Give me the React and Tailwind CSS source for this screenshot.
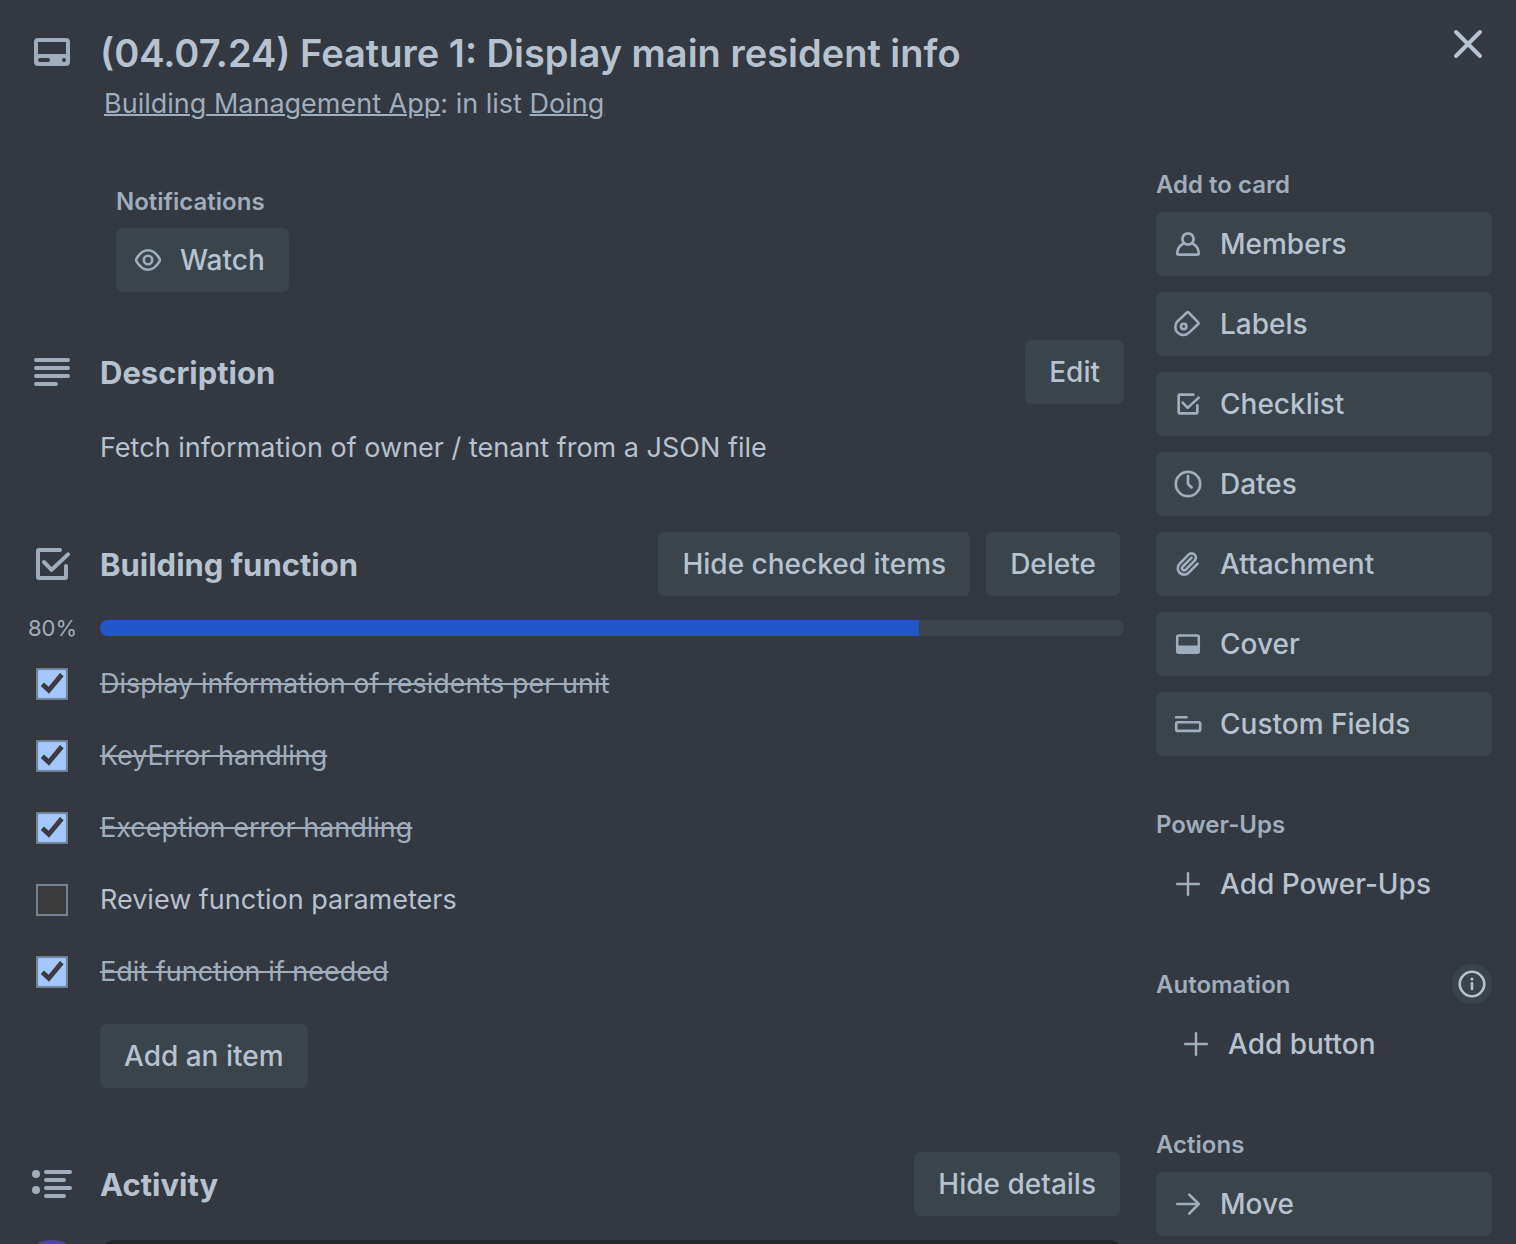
import React, { useState } from "react";

function Icon({ box = 32, className = "size-8", width = 2, children }) {
  return (
    <svg
      viewBox={`0 0 ${box} ${box}`}
      className={`shrink-0 ${className}`}
      fill="none"
      stroke="currentColor"
      strokeWidth={width}
      strokeLinecap="round"
      strokeLinejoin="round"
      aria-hidden="true"
    >
      {children}
    </svg>
  );
}

const SectionIcon = ({ children }) => (
  <Icon box={24} className="size-12 text-[#9fadbc]">
    {children}
  </Icon>
);

const checkSquare = (
  <>
    <path d="M16 5H5.6a.6.6 0 0 0-.6.6v12.8a.6.6 0 0 0 .6.6h12.8a.6.6 0 0 0 .6-.6V13" />
    <path d="M8 11l3.8 3.9L20 7.2" />
  </>
);

const icons = {
  members: (
    <Icon width={2.7}>
      <circle cx="16" cy="11" r="5.600" />
      <path d="M11.200 15.600C7.800 17.500 5.300 21 5.300 25.400a1.200 1.200 0 0 0 1.200 1.200h19a1.200 1.200 0 0 0 1.200-1.200C26.700 21 24.200 17.500 20.800 15.600" />
    </Icon>
  ),
  labels: (
    <Icon width={2.6}>
      <path d="M5.600 13.200L14.900 4.500a1.200 1.200 0 0 1 1.700 0L26.200 14.300a1.200 1.200 0 0 1 0 1.700L17.100 24.600A8 8 0 1 1 5.600 13.200Z" />
      <circle cx="11.700" cy="18.500" r="2.700" />
    </Icon>
  ),
  checklist: (
    <Icon box={24} width={2}>
      {checkSquare}
    </Icon>
  ),
  dates: (
    <Icon width={2.700}>
      <circle cx="16" cy="16" r="12.200" />
      <path d="M16 8v8l3.600 3.400" />
    </Icon>
  ),
  attachment: (
    <Icon box={24} width={2.5}>
      <g transform="translate(11.500 12) scale(.8) translate(-12 -12)">
        <path d="m16 6-8.414 8.586a2 2 0 0 0 2.829 2.829l8.414-8.586a4 4 0 1 0-5.657-5.657l-8.379 8.551a6 6 0 1 0 8.485 8.485l8.379-8.551" />
      </g>
    </Icon>
  ),
  cover: (
    <Icon width={2.5}>
      <rect x="5.200" y="7.500" width="21.600" height="17.300" rx="1.500" />
      <path d="M6 17.500h20v6.500H6z" fill="currentColor" stroke="none" />
    </Icon>
  ),
  fields: (
    <Icon width={2.6}>
      <path d="M4.200 9.200h10.400" />
      <rect x="4.200" y="14.300" width="24" height="8.600" rx="1.500" />
    </Icon>
  ),
  plus: (
    <Icon width={2.5}>
      <path d="M16 5.200v21.600M5.200 16h21.600" />
    </Icon>
  ),
  arrow: (
    <Icon width={2.6}>
      <path d="M5.200 16h21.600M17.200 6.600L26.800 16l-9.600 9.600" />
    </Icon>
  ),
  eye: (
    <Icon width={2.6}>
      <path d="M4.500 14.600C7.500 9.600 11.300 6.300 16 6.300s8.500 3.300 11.500 8.300a2.700 2.700 0 0 1 0 2.800C24.500 22.400 20.700 25.700 16 25.700S7.500 22.400 4.500 17.400a2.700 2.700 0 0 1 0-2.800Z" />
      <circle cx="16" cy="16" r="4.200" />
    </Icon>
  ),
};

const Button = ({ children, className = "" }) => (
  <button type="button" className={`h-16 rounded-md bg-[#3b444a] px-6 text-[28px] leading-8 font-medium whitespace-nowrap text-[#b6c2cf] ${className}`}>
    {children}
  </button>
);

const SideButton = ({ icon, children, className = "bg-[#3b444a] px-4" }) => (
  <button type="button" className={`flex h-16 w-full items-center gap-4 rounded-md text-[28px] leading-8 font-medium text-[#b6c2cf] ${className}`}>
    <span className="text-[#9fadbc]">{icons[icon]}</span>
    {children}
  </button>
);

function SideSection({ title, action, children }) {
  return (
    <section>
      <div className="mb-2 flex h-10 items-center justify-between">
        <h3 className="pt-0.5 text-2xl font-semibold text-[#9fadbc]">{title}</h3>
        {action}
      </div>
      <div className="flex flex-col gap-4">{children}</div>
    </section>
  );
}

function SectionHeader({ icon, title, children, className = "" }) {
  return (
    <div className={`flex h-16 items-center ${className}`}>
      <SectionIcon>{icon}</SectionIcon>
      <h2 className="ml-6 grow pt-0.5 text-[31px] font-bold">{title}</h2>
      <div className="flex gap-4">{children}</div>
    </div>
  );
}

const initialItems = [
  { text: "Display information of residents per unit", done: true },
  { text: "KeyError handling", done: true },
  { text: "Exception error handling", done: true },
  { text: "Review function parameters", done: false },
  { text: "Edit function if needed", done: true },
];

function ChecklistItem({ item, onToggle }) {
  return (
    <li>
      <label className="flex h-18 items-center gap-8 pl-2">
        <span className="relative size-8 shrink-0">
          <input
            type="checkbox"
            checked={item.done}
            onChange={onToggle}
            className="block size-8 appearance-none border-2 border-[#738496] bg-[#3b3b3b] checked:bg-[#a4c7ff]"
          />
          {item.done && (
            <svg viewBox="0 0 32 32" className="pointer-events-none absolute inset-0 size-8" fill="none" stroke="#3b3b3b" strokeWidth="4.800" aria-hidden="true">
              <path d="M6.400 16.200l6.400 6L25.800 6.600" />
            </svg>
          )}
        </span>
        <span className={item.done ? "text-[27px] text-[#9fadbc] line-through decoration-2" : "text-[27px]"}>{item.text}</span>
      </label>
    </li>
  );
}

export default function App() {
  const [items, setItems] = useState(initialItems);
  const percent = Math.round((items.filter((i) => i.done).length / items.length) * 100);
  const toggle = (index) => setItems(items.map((it, i) => (i === index ? { ...it, done: !it.done } : it)));

  return (
    <div className="h-screen overflow-hidden bg-[#343840] font-['Inter','Liberation_Sans',sans-serif] text-[#b6c2cf]">
      <header className="flex items-start pt-5 pr-6 pl-7">
        <div className="mt-2">
          <SectionIcon>
            <path
              fillRule="evenodd"
              fill="currentColor"
              stroke="none"
              d="M5 5h14a2 2 0 0 1 2 2v10a2 2 0 0 1-2 2H5a2 2 0 0 1-2-2V7a2 2 0 0 1 2-2ZM5 7v6h14V7ZM6 15a1 1 0 0 0 0 2h4a1 1 0 0 0 0-2ZM18 15a1 1 0 1 0 0 2a1 1 0 0 0 0-2Z"
            />
          </SectionIcon>
        </div>
        <div className="mt-2 ml-6 grow">
          <h1 className="text-[38px] leading-[50px] font-semibold">(04.07.24) Feature 1: Display main resident info</h1>
          <p className="mt-2 ml-1 text-[27px] leading-9 text-[#9fadbc]">
            <a href="#board" className="underline decoration-2">Building Management App</a>: in list{" "}
            <a href="#list" className="underline decoration-2">Doing</a>
          </p>
        </div>
        <button type="button" aria-label="Close">
          <Icon box={24} className="size-12">
            <path d="M6 6l12 12M18 6L6 18" />
          </Icon>
        </button>
      </header>

      <div className="mt-[42px] flex gap-8 pr-6 pl-7">
        <main className="grow">
          <section className="mt-5 ml-22">
            <h3 className="pt-0.5 text-2xl font-semibold text-[#9fadbc]">Notifications</h3>
            <Button className="mt-2.5 flex items-center gap-4 pl-4">
              <span className="text-[#9fadbc]">{icons.eye}</span>
              Watch
            </Button>
          </section>

          <section className="mt-12">
            <SectionHeader title="Description" icon={<path d="M4 6h16M4 10h16M4 14h16M4 18h10" />}>
              <Button>Edit</Button>
            </SectionHeader>
            <p className="mt-6 ml-18 text-[27px] leading-10">Fetch information of owner / tenant from a JSON file</p>
          </section>

          <section className="mt-16">
            <SectionHeader title="Building function" icon={checkSquare} className="pr-1">
              <Button>Hide checked items</Button>
              <Button>Delete</Button>
            </SectionHeader>
            <div className="mt-4 flex h-8 items-center">
              <span className="w-18 text-[22px] text-[#9fadbc]">{percent}%</span>
              <div className="h-4 grow overflow-hidden rounded-full bg-[#3b444a]" role="progressbar" aria-label="Checklist progress" aria-valuenow={percent}>
                <div className="h-full bg-[#2155c8]" style={{ width: `${percent}%` }} />
              </div>
            </div>
            <ul className="mt-1">
              {items.map((item, i) => (
                <ChecklistItem key={item.text} item={item} onToggle={() => toggle(i)} />
              ))}
            </ul>
            <Button className="mt-4 ml-18">Add an item</Button>
          </section>

          <section className="mt-16">
            <SectionHeader
              title="Activity"
              className="pr-1"
              icon={
                <>
                  <path d="M9 6h12M9 10h9M9 14h12M9 18h9" />
                  <g fill="currentColor" stroke="none">
                    <circle cx="4" cy="7" r="2" />
                    <circle cx="4" cy="15" r="2" />
                  </g>
                </>
              }
            >
              <Button>Hide details</Button>
            </SectionHeader>
            <div className="mt-6 -ml-2 flex gap-4">
              <div className="size-16 shrink-0 rounded-full bg-[#5243aa]" />
              <input type="text" aria-label="Comment" className="h-18 min-w-0 grow rounded-2xl bg-[#22272b] px-6 text-[27px] shadow" />
            </div>
          </section>
        </main>

        <aside className="flex w-84 shrink-0 flex-col gap-12">
          <SideSection title="Add to card">
            <SideButton icon="members">Members</SideButton>
            <SideButton icon="labels">Labels</SideButton>
            <SideButton icon="checklist">Checklist</SideButton>
            <SideButton icon="dates">Dates</SideButton>
            <SideButton icon="attachment">Attachment</SideButton>
            <SideButton icon="cover">Cover</SideButton>
            <SideButton icon="fields">Custom Fields</SideButton>
          </SideSection>
          <SideSection title="Power-Ups">
            <SideButton icon="plus" className="px-4">Add Power-Ups</SideButton>
          </SideSection>
          <SideSection
            title="Automation"
            action={
              <button type="button" aria-label="About automation" className="flex size-10 items-center justify-center rounded-full bg-[#3b444a]">
                <Icon width={2.6}>
                  <circle cx="16" cy="16" r="12.200" />
                  <path d="M16 15.200v5.800" />
                  <circle cx="16" cy="11" r="1.600" fill="currentColor" stroke="none" />
                </Icon>
              </button>
            }
          >
            <SideButton icon="plus" className="px-6">Add button</SideButton>
          </SideSection>
          <SideSection title="Actions">
            <SideButton icon="arrow">Move</SideButton>
          </SideSection>
        </aside>
      </div>
    </div>
  );
}
